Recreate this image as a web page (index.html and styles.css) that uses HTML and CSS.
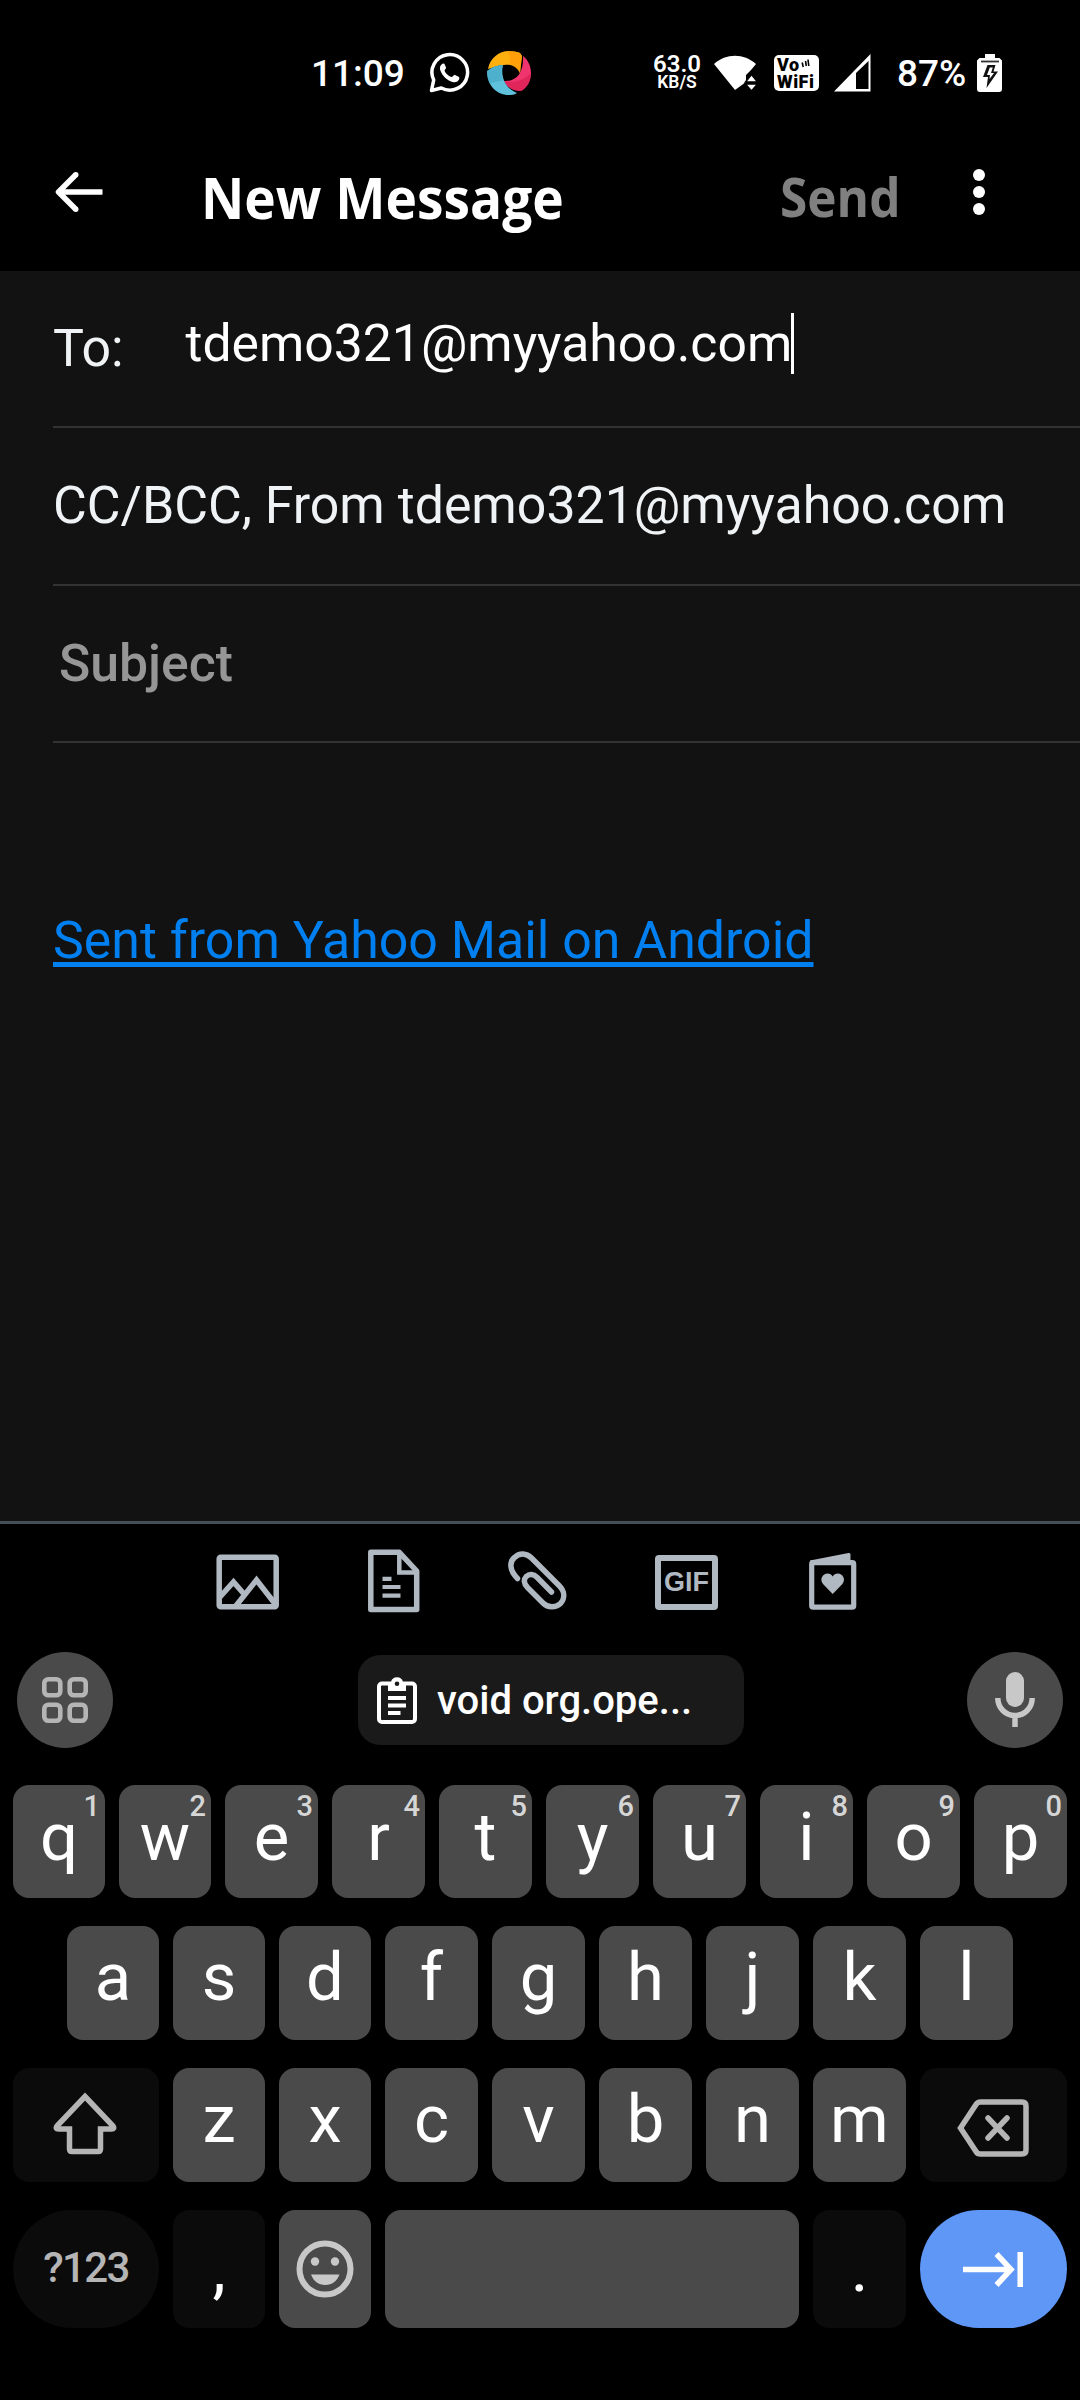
FILE: index.html
```html
<!DOCTYPE html>
<html lang="en">
<head>
<meta charset="utf-8">
<title>New Message</title>
<link rel="stylesheet" href="styles.css">
</head>
<body>
<div class="screen">
  <header class="status">
    <span class="clock">11:09</span>
    <svg class="whatsapp" width="41" height="41" viewBox="0 0 41 41"><path d="M2.500 38.500l2.200-10.500A17.800 17.800 0 1 1 12.300 36z" fill="none" stroke="#fff" stroke-width="3.500" stroke-linejoin="round"/><path d="M14 11.500c-2.600 1.200-3.700 4-2.600 7 2 5.600 6.500 9.700 12 11.500 3 .9 6-.4 6.900-3l-.2-2-4.600-2.300c-1.500 1-2 2.500-3.200 2.200-3.200-1.200-5.300-3.200-6.700-6-.4-1.100 1.300-1.700 1.500-3.200l-1.700-3.900z" fill="#fff"/></svg>
    <svg class="ring" width="44" height="44" viewBox="0 0 44 44"><path d="M1 18C3 7 12 0 22 0c5 0 9 1 11 2l2 3-2 17C30 14 22 10 1 18z" fill="#feb00f"/><path d="M22 0c5 0 9 1 11 2l2 3-2 17c-2-4-6-7-11-9 2-5 1-9-2-13z" fill="#ff9908" opacity=".75"/><path d="M36 5c5 4 8 10 8 17 0 8-4 15-10 18-7 0-14-3-17-10 12 1 20-8 19-25z" fill="#f0346e"/><path d="M44 22c0 8-4 15-10 18-7 0-14-3-17-10 11 3 20-1 27-8z" fill="#d91f52" opacity=".7"/><path d="M0 20c5-4 10-6 16-6-3 12 3 24 14 28-3 2-6 2-8 2C9 44 0 34 0 20z" fill="#5fc1dc"/><path d="M0 20c5-4 10-6 16-6-2 6-2 11 0 16-7 0-12 2-13 3-2-4-3-8-3-13z" fill="#41a5c2" opacity=".6"/></svg>
    <span class="speed"><b>63.0</b><i>KB/S</i></span>
    <svg class="wifi" width="43" height="36" viewBox="0 0 43 36"><path d="M0 9C12-2 30-2 42 9L37 15 32 20v7L21 35z" fill="#fff"/><path d="M31.500 27l6-7.500 6 7.500zM31.500 29h12l-6 7z" fill="#fff" stroke="#000" stroke-width="1.500"/></svg>
    <span class="vowifi"><b>Vo<svg width="9" height="10" viewBox="0 0 9 10"><path d="M1.200 3.500l1 4.500M4.500 2l.8 5M7 .5l.8 6.500" stroke="#000" stroke-width="1.600" fill="none"/></svg></b><b>WiFi</b></span>
    <svg class="signal" width="38" height="38" viewBox="0 0 38 38"><path d="M36.500 0v37.500H0zM22 19v16h12.500V7z" fill="#fff" fill-rule="evenodd"/></svg>
    <span class="percent">87%</span>
    <svg class="battery" width="26" height="38" viewBox="0 0 26 38"><path d="M8 0h10v4h4.500l2.500 2.500V35q0 3-3 3H3q-3 0-3-3V6.500L2.500 4H8z" fill="#fff"/><path d="M4 7.500h18" stroke="#333" stroke-width="1.800"/><path d="M10.500 11h8l-2 6.500h4.500L9.500 34l1.500-11H6z" fill="#111"/><path d="M12.800 13.500h3L14 19h3l-4.500 6 .5-4h-3z" fill="#fff"/></svg>
  </header>

  <div class="appbar">
    <svg class="back" width="48" height="42" viewBox="0 0 48 42"><path d="M47.500 21H4M21 3.500L3.500 21 21 38.500" fill="none" stroke="#fff" stroke-width="5.500" stroke-linejoin="round"/><circle cx="20.800" cy="3.700" r="2.700" fill="#fff"/><circle cx="20.800" cy="38.300" r="2.700" fill="#fff"/></svg>
    <h1 class="title">New Message</h1>
    <span class="send">Send</span>
    <svg class="more" width="12" height="46" viewBox="0 0 12 46"><g fill="#fff"><circle cx="6" cy="6" r="6"/><circle cx="6" cy="23" r="6"/><circle cx="6" cy="40" r="6"/></g></svg>
  </div>

  <main class="compose">
    <div class="field"><span class="label">To:</span><span class="address">tdemo321@myyahoo.com</span><span class="caret"></span></div>
    <div class="field cc">CC/BCC, From tdemo321@myyahoo.com</div>
    <div class="field subject">Subject</div>
    <a class="signature">Sent from Yahoo Mail on Android</a>
  </main>

  <nav class="attach">
    <svg width="64" height="56" viewBox="0 0 64 56"><g fill="none" stroke="#b0b8c1" stroke-width="5.500"><rect x="3.200" y="3.200" width="57" height="49.500" rx="1.500"/><path d="M4 43L17.500 28 28 40M19 53L40.500 26 60 51"/></g></svg>
    <svg class="doc" width="52" height="64" viewBox="0 0 52 64"><g fill="none" stroke="#b0b8c1" stroke-width="5.500" stroke-linejoin="round"><path d="M2.800 3.300h28.500L48.700 22v38.500H2.800z"/><path d="M31.300 3.500V23.500H49" stroke-width="4.500" stroke-linejoin="miter"/><path d="M14.500 29.800h9M14.500 38h18M14.500 46.700h18" stroke-width="4.200"/></g></svg>
    <svg class="clip" width="60" height="60" viewBox="0 0 60 60"><path d="M9.500 27.500C1 19 1.500 10.500 6.500 6.500c5-5 12-4.500 17 .5L51 34.500c6 6 6 13 1.500 18-5 4.500-12.500 4.500-17.500-.5L19.500 36.500c-4-4-4-8-1.300-11 3-2.700 7.300-2.700 11 1L43.500 41" fill="none" stroke="#b0b8c1" stroke-width="5.500" stroke-linecap="round"/></svg>
    <span class="gif">GIF</span>
    <svg class="card" width="48" height="58" viewBox="0 0 48 58"><rect x="2.700" y="10.700" width="42" height="44.500" rx="1.500" fill="none" stroke="#b0b8c1" stroke-width="5.200"/><path d="M1 8.500L39.500 1q2-.5 2 1.500v7H1z" fill="#b0b8c1"/><path d="M23.700 42L14 32c-4-5 0-10.500 4.500-10.500 2.500 0 4.200 1.200 5.200 3 1-1.800 2.700-3 5.200-3 4.500 0 8.500 5.500 4.500 10.500z" fill="#b0b8c1"/></svg>
  </nav>

  <section class="keyboard">
    <div class="strip">
      <span class="round"><svg width="48" height="48" viewBox="0 0 48 48"><g fill="none" stroke="#b5b5b5" stroke-width="4.600"><rect x="3.300" y="3.300" width="16" height="16" rx="4"/><rect x="28.700" y="3.300" width="16" height="16" rx="4"/><rect x="3.300" y="28.700" width="16" height="16" rx="4"/><rect x="28.700" y="28.700" width="16" height="16" rx="4"/></g></svg></span>
      <span class="chip"><svg width="40" height="47" viewBox="0 0 40 47"><rect x="2" y="6.500" width="36" height="38.500" rx="3" fill="none" stroke="#fff" stroke-width="4"/><path d="M11 5h3a6.200 6.200 0 0 1 12 0h3v9H11z" fill="#fff"/><circle cx="20" cy="6.800" r="2.300" fill="#1a1a1a"/><path d="M11 21h18M11 28.600h18M11 36h12.500" stroke="#fff" stroke-width="4"/></svg><span class="cliptext">void org.ope...</span></span>
      <span class="round"><svg width="40" height="56" viewBox="0 0 40 56"><rect x="11" y="0" width="18" height="35" rx="9" fill="#c8c8c8"/><path d="M2.800 26c0 10 7.700 17.500 17.200 17.500S37.200 36 37.200 26M20 43v12" fill="none" stroke="#c8c8c8" stroke-width="5.500"/></svg></span>
    </div>
    <div class="row top">
      <span class="key">q<sup>1</sup></span><span class="key">w<sup>2</sup></span><span class="key">e<sup>3</sup></span><span class="key">r<sup>4</sup></span><span class="key">t<sup>5</sup></span><span class="key">y<sup>6</sup></span><span class="key">u<sup>7</sup></span><span class="key">i<sup>8</sup></span><span class="key">o<sup>9</sup></span><span class="key">p<sup>0</sup></span>
    </div>
    <div class="row home">
      <span class="key">a</span><span class="key">s</span><span class="key">d</span><span class="key">f</span><span class="key">g</span><span class="key">h</span><span class="key">j</span><span class="key">k</span><span class="key">l</span>
    </div>
    <div class="row lower">
      <span class="key icon dark"><svg class="shift" width="64" height="64" viewBox="0 0 64 64"><path d="M32 4.500L60 34q2 3-1.500 3H47.500V57q0 2.500-2.500 2.500H19q-2.500 0-2.500-2.500V37H5.500Q2 37 4 34z" fill="none" stroke="#b5b5b5" stroke-width="5.500"/></svg></span><span class="key">z</span><span class="key">x</span><span class="key">c</span><span class="key">v</span><span class="key">b</span><span class="key">n</span><span class="key">m</span><span class="key icon dark"><svg class="bksp" width="72" height="58" viewBox="0 0 72 58"><path d="M3.500 29L19 5.500Q20.500 3 23.500 3H65q4 0 4 4V51q0 4-4 4H23.500Q20.500 55 19 52.500zM31 19L50 39M50 19L31 39" fill="none" stroke="#b5b5b5" stroke-width="5.500" stroke-linecap="round"/></svg></span>
    </div>
    <div class="row last">
      <span class="key dark pill symbols">?123</span><span class="key dark punct">,</span><span class="key icon"><svg width="58" height="58" viewBox="0 0 58 58"><circle cx="29" cy="29" r="25.500" fill="none" stroke="#c8c8c8" stroke-width="6"/><circle cx="19" cy="21.500" r="4.200" fill="#c8c8c8"/><circle cx="39" cy="21.500" r="4.200" fill="#c8c8c8"/><path d="M15 34.500h28.500C41 41 36 45 29.200 45S17.500 41 15 34.500z" fill="#c8c8c8"/></svg></span><span class="key"></span><span class="key dark punct">.</span><span class="key icon pill enter"><svg width="60" height="36" viewBox="0 0 60 36"><path d="M0 18.500h48M33.500 3L48 18.500 33.500 34M57.200 1v35" fill="none" stroke="#fff" stroke-width="5.500"/></svg></span>
    </div>
  </section>
</div>
</body>
</html>
```
FILE: styles.css
```css
* { box-sizing: border-box; }
body { margin: 0; background: #000; }
svg { display: block; flex: none; }
.screen {
  width: 1080px; height: 2400px; overflow: hidden;
  display: flex; flex-direction: column;
  background: #000; color: #fff; font-family: Roboto, sans-serif; white-space: nowrap;
}

/* system status bar */
.status { height: 145px; display: flex; align-items: center; padding-left: 311px; }
.clock, .percent { padding-top: 2px; font-size: 37px; font-weight: 500; line-height: 44px; flex: none; }
.clock { width: 118px; }
.whatsapp { margin-right: 17px; }
.ring { margin-right: 122px; }
.speed { width: 48px; margin-right: 13px; padding-top: 1px; display: flex; flex-direction: column; align-items: center; }
.speed b { font-size: 24px; font-weight: 600; line-height: 18px; }
.speed i { font-size: 17.500px; font-weight: 600; font-style: normal; line-height: 19px; }
.wifi { margin-right: 17px; }
.vowifi {
  width: 45px; height: 36px; margin-right: 15px; padding: 1px 0 0 3px; border-radius: 5px;
  display: flex; flex-direction: column; flex: none; background: #fff; color: #000;
}
.vowifi b { display: flex; gap: 1px; font-size: 18px; font-weight: 900; line-height: 17px; letter-spacing: .5px; }
.vowifi svg { margin-top: 3px; }
.signal { margin-right: 25px; }
.percent { width: 80px; }

/* app bar */
.appbar { height: 126px; display: flex; padding: 0 95px 32px 55px; align-items: center; }
.title, .send {
  margin: 0; padding-top: 10px; flex: none;
  font-family: "Open Sans", sans-serif; font-weight: 700; line-height: 70px;
  transform: scaleX(.935); transform-origin: left;
}
.title { margin-left: 98px; width: 579px; font-size: 57px; }
.send { width: 193px; font-size: 53px; color: #808080; }

/* message form */
.compose { height: 1250px; padding-left: 53px; background: #121212; font-size: 51.850px; line-height: 60px; }
.field { height: 157px; display: flex; align-items: center; border-bottom: 2px solid #333; color: #f0f3f5; }
.label { width: 132.500px; }
.address { padding-bottom: 10px; font-size: 51.700px; color: #fff; }
.caret { width: 3px; height: 61px; background: #fff; margin: 0 0 10px -1px; }
.cc { height: 158px; }
.subject { padding-left: 6px; font-size: 51.700px; font-weight: 500; color: #969696; }
.signature {
  display: inline-block; margin-top: 168px; color: #0080f0;
  text-decoration: underline; text-decoration-thickness: 5px; text-underline-offset: 4px;
}

/* attachment toolbar */
.attach { height: 119px; padding-left: 216px; border-top: 3px solid #464e56; display: flex; align-items: center; }
.doc, .clip { margin: 0 0 2px 88px; }
.card { margin: 0 0 2px 91px; }
.gif {
  width: 63px; height: 55px; margin-left: 87px; border: 6px solid #b0b8c1; border-radius: 4px; color: #b0b8c1;
  font: 700 27px/43px "Liberation Sans", sans-serif; display: flex; justify-content: center;
}

/* keyboard */
.keyboard { padding: 12px 13px 0; display: flex; flex-direction: column; gap: 28px; }
.strip { height: 96px; margin: 0 4px 9px; display: flex; justify-content: space-between; align-items: center; }
.round { width: 96px; height: 96px; border-radius: 48px; background: #4a4a4a; display: flex; align-items: center; justify-content: center; }
.chip {
  width: 386px; height: 90px; margin-left: 22px; padding-left: 19px; border-radius: 22px;
  background: #1a1a1a; display: flex; align-items: center; gap: 20px;
}
.cliptext { font-size: 40px; font-weight: 500; }
.row { height: 114px; display: grid; column-gap: 14px; }
.top { height: 113px; grid-template-columns: repeat(2, 92px) repeat(8, 93px); }
.home { padding-left: 54px; grid-template-columns: repeat(3, 92px) repeat(6, 93px); }
.lower { grid-template-columns: 146px repeat(2, 92px) repeat(5, 93px) 147px; }
.last { height: 118px; grid-template-columns: 146px 92px 92px 414px 93px 147px; }
.key {
  position: relative; border-radius: 16px; background: #4a4a4a;
  display: flex; align-items: center; justify-content: center;
  font-size: 67px; line-height: 78px; padding-bottom: 12px;
}
.top .key { padding-bottom: 10px; }
.key sup { position: absolute; top: 4px; right: 5px; font-size: 29px; font-weight: 500; line-height: 34px; color: #d6d6d6; }
.key.icon { padding-bottom: 0; }
.key.icon.dark, .key.enter { padding-right: 2px; }
.dark { background: #0b0b0b; }
.pill { border-radius: 59px; }
.key.symbols { font-size: 42px; font-weight: 500; letter-spacing: -1.600px; color: #b5b5b5; padding-bottom: 2px; }
.key.punct { padding-bottom: 2px; }
.enter { background: #5e97f6; }
.shift { margin-bottom: 2px; }
.bksp { margin-top: 5px; }
```
